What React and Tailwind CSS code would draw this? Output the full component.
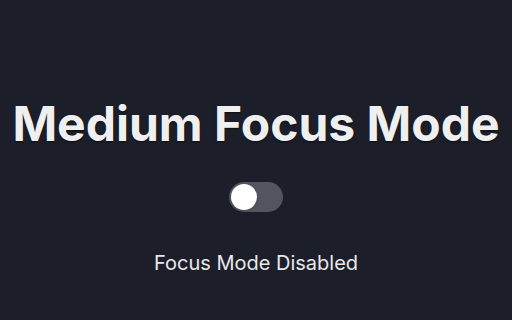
import React, { useState } from 'react';

const App = () => {
  const [enabled, setEnabled] = useState(false);

  return (
    <div
      className="w-[512px] h-[320px] bg-[#1c1f2a] flex flex-col items-center text-[#efeff0]"
      style={{ fontFamily: 'Inter, "Noto Sans", sans-serif' }}
    >
      <h1 className="mt-[96px] text-[48px] leading-[56px] font-bold whitespace-nowrap [text-shadow:0_1px_2px_rgba(0,0,0,0.6)]">
        Medium Focus Mode
      </h1>

      <button
        onClick={() => setEnabled(!enabled)}
        className={`mt-[30px] w-[54px] h-[30px] rounded-full p-[2px] flex items-center ${enabled ? 'bg-[#4f7cf7] justify-end' : 'bg-[#52555f] justify-start'}`}
      >
        <span className="w-[26px] h-[26px] rounded-full bg-white shadow" />
      </button>

      <p className="mt-[37px] text-[20px] leading-[28px] text-[#e8e8ea]">
        Focus Mode {enabled ? 'Enabled' : 'Disabled'}
      </p>
    </div>
  );
};

export default App;
